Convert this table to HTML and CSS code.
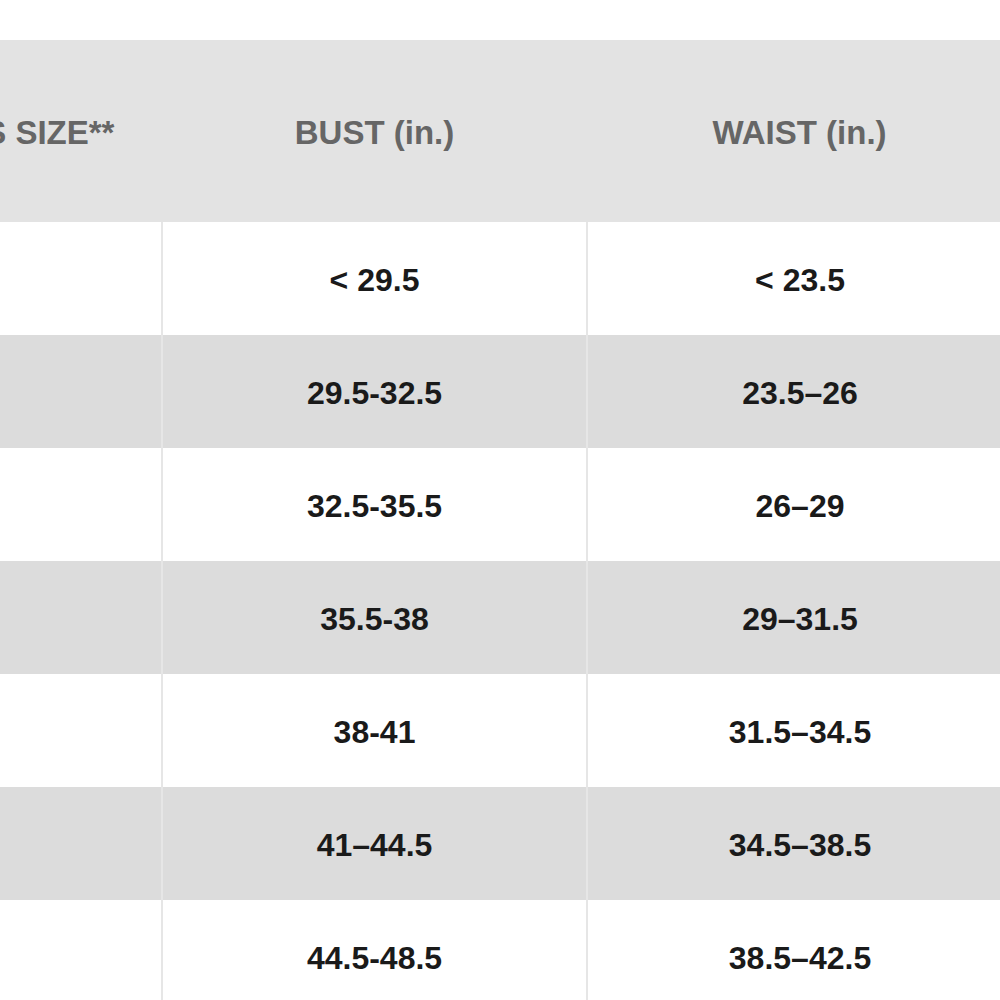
FILE: index.html
```html
<!DOCTYPE html>
<html lang="en">
<head>
<meta charset="utf-8">
<title>Size Chart</title>
<link rel="stylesheet" href="styles.css">
</head>
<body>
<div class="chart">
  <table class="sizes">
    <colgroup>
      <col class="c-size">
      <col class="c-bust">
      <col class="c-waist">
    </colgroup>
    <thead>
      <tr>
        <th>US DRESS SIZE**</th>
        <th>BUST (in.)</th>
        <th>WAIST (in.)</th>
      </tr>
    </thead>
    <tbody>
      <tr><td class="lbl"></td><td>&lt; 29.5</td><td>&lt; 23.5</td></tr>
      <tr class="alt"><td class="lbl"></td><td>29.5-32.5</td><td>23.5–26</td></tr>
      <tr><td class="lbl"></td><td>32.5-35.5</td><td>26–29</td></tr>
      <tr class="alt"><td class="lbl"></td><td>35.5-38</td><td>29–31.5</td></tr>
      <tr><td class="lbl"></td><td>38-41</td><td>31.5–34.5</td></tr>
      <tr class="alt"><td class="lbl"></td><td>41–44.5</td><td>34.5–38.5</td></tr>
      <tr><td class="lbl"></td><td>44.5-48.5</td><td>38.5–42.5</td></tr>
    </tbody>
  </table>
</div>
</body>
</html>
```

FILE: styles.css
```css
html, body {
  margin: 0;
  padding: 0;
  overflow: hidden;
  background: #ffffff;
  width: 1000px;
  height: 1000px;
}

.chart {
  padding-top: 40px;
  margin-left: -210px;
  width: 1300px;
}

.sizes {
  border-collapse: collapse;
  table-layout: fixed;
  width: 1222px;
  font-family: "Liberation Sans", Arial, Helvetica, sans-serif;
  font-weight: bold;
}

.c-size { width: 372px; }
.c-bust { width: 425px; }
.c-waist { width: 425px; }

.sizes th {
  height: 182px;
  padding: 4px 0 0 0;
  box-sizing: border-box;
  background: #e3e3e3;
  color: #666666;
  font-size: 33px;
  font-weight: bold;
  text-align: center;
  vertical-align: middle;
}

.sizes td {
  height: 113px;
  padding: 4px 0 0 0;
  box-sizing: border-box;
  font-size: 32px;
  color: #1a1a1a;
  text-align: center;
  vertical-align: middle;
  border-left: 2px solid #e6e6e6;
}

.sizes td.lbl {
  border-left: none;
}

.sizes tr.alt td {
  background: #dcdcdc;
}
```
